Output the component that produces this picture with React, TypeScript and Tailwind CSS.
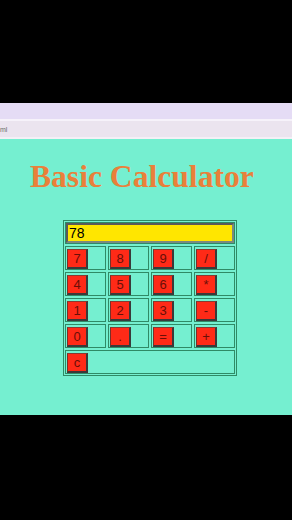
import React from "react";

const rows = [
  ["7", "8", "9", "/"],
  ["4", "5", "6", "*"],
  ["1", "2", "3", "-"],
  ["0", ".", "=", "+"],
];

function Btn({ label }: { label: string }) {
  return (
    <div className="w-[21px] h-[20px] bg-[#ff2a17] border-t border-l border-t-[#8a3a30] border-l-[#7a3028] border-b-2 border-r-2 border-b-[#3a3a3a] border-r-[#3a3a3a] flex items-center justify-center text-[13px] leading-none text-[#6a0f08] font-['Liberation_Sans',Arial,sans-serif]">
      {label}
    </div>
  );
}

function Cell({ label, wide }: { label: string; wide?: boolean }) {
  return (
    <div
      className={`${wide ? "w-full" : "w-[41px]"} h-[24px] border border-[#2f8a66] pl-[1px] pt-[2px]`}
    >
      <Btn label={label} />
    </div>
  );
}

export default function App() {
  return (
    <div className="w-[292px] h-[520px] bg-black flex flex-col overflow-hidden">
      <div className="h-[103px] shrink-0 bg-black" />
      <div className="h-[16px] shrink-0 bg-[#e5dcf5]" />
      <div className="h-[2px] shrink-0 bg-[#f6f2fa]" />
      <div className="h-[16px] shrink-0 bg-[#ebe4ef] flex items-center">
        <span className="text-[7px] leading-none text-[#6d6d6d] font-['Liberation_Sans',Arial,sans-serif]">
          ml
        </span>
      </div>
      <div className="h-[2px] shrink-0 bg-[#f4f0f6]" />
      <div className="h-[276px] shrink-0 bg-[#75efd0] flex flex-col">
        <h1 className="mt-[22px] pl-[30px] h-[31px] text-[31.6px] leading-[31px] font-bold text-[#e9803a] font-['Liberation_Serif','Times_New_Roman',serif] whitespace-nowrap">
          Basic Calculator
        </h1>
        <div className="mt-[28px] ml-[63px] w-[174px] border border-[#2f8a66] p-[1px] flex flex-col gap-[2px]">
          <div className="h-[22px] border border-[#2f8a66] p-0">
            <div className="h-[20px] w-full bg-[#ffe600] border-2 border-t-[#5a5a5a] border-l-[#5a5a5a] border-b-[#7a8a80] border-r-[#7a8a80] flex items-center pl-[1px] text-[14px] leading-none text-black font-['Liberation_Sans',Arial,sans-serif]">
              78
            </div>
          </div>
          {rows.map((r, i) => (
            <div key={i} className="flex gap-[2px]">
              {r.map((l) => (
                <Cell key={l} label={l} />
              ))}
            </div>
          ))}
          <div className="flex">
            <Cell label="c" wide />
          </div>
        </div>
      </div>
      <div className="flex-1 bg-black" />
    </div>
  );
}
